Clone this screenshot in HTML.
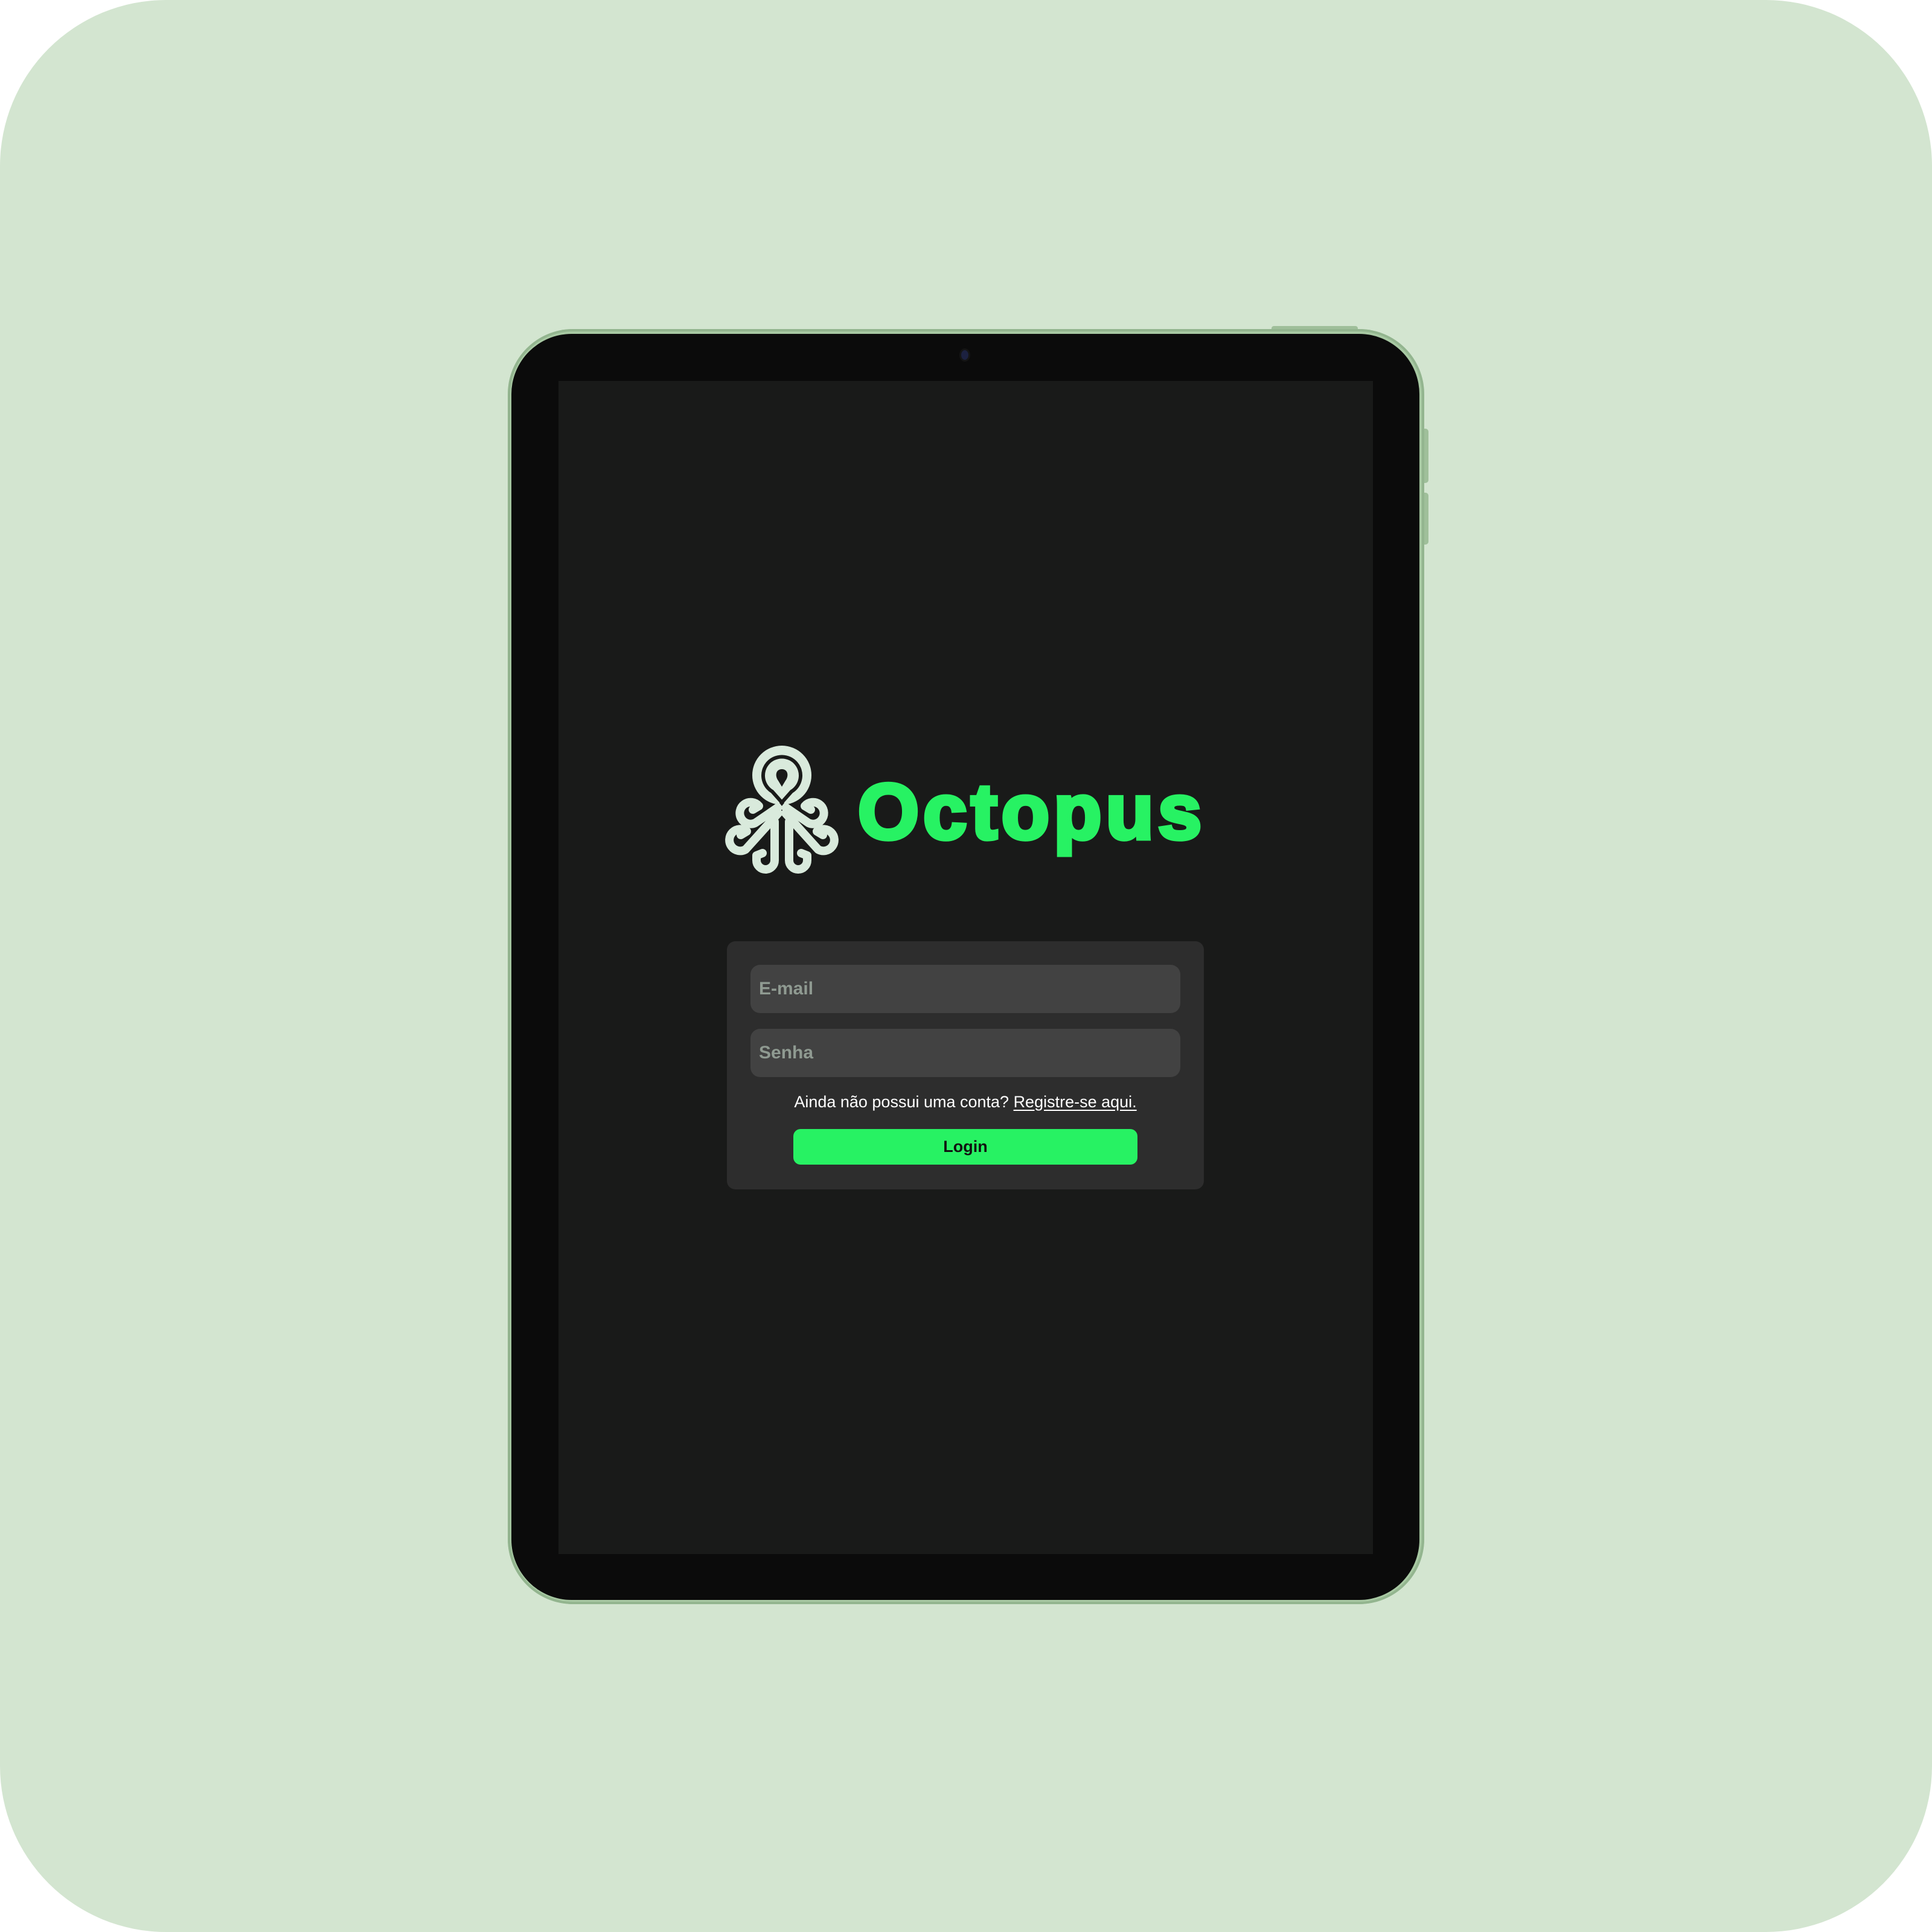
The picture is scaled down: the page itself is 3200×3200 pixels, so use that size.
<!DOCTYPE html>
<html><head><meta charset="utf-8"><style>
html,body{margin:0;padding:0;background:#fff}
.page{position:relative;width:3200px;height:3200px;background:#d3e5d0;border-radius:275px;overflow:hidden;font-family:"Liberation Sans",sans-serif}
.abs{position:absolute}
.frame{left:841px;top:545px;width:1518px;height:2112px;border-radius:108px;background:#a8c9a3;box-shadow:inset 0 0 0 4px #93b58f}
.bezel{left:847px;top:553px;width:1504px;height:2097px;border-radius:100px;background:#0b0b0b}
.screen{left:925px;top:631px;width:1349px;height:1943px;background:#191a19}
.btn-top{left:2106px;top:540px;width:143px;height:7px;background:#9fbf9a;border-radius:4px 4px 0 0}
.side{left:2357px;width:9px;background:#9fbf9a;border-radius:0 5px 5px 0}
.cam{left:1592px;top:580px;width:12px;height:16px;border-radius:50%;background:#1c2140;box-shadow:0 0 0 3px #151515}
.title{left:1421px;top:1279px;font-size:130px;font-weight:bold;color:#27f263;letter-spacing:7px;-webkit-text-stroke:7px #27f263;line-height:1}
.card{left:1204px;top:1559px;width:790px;height:411px;background:#2d2d2d;border-radius:14px}
.inp{left:1243px;width:712px;height:80px;background:#424242;border-radius:16px;color:#8f9a91;font-weight:bold;font-size:30px;line-height:80px;text-indent:14px}
.note{left:1204px;width:790px;top:1810px;text-align:center;color:#fff;font-size:27px}
.note u{text-underline-offset:4px}
.login{left:1314px;top:1870px;width:570px;height:59px;background:#27f263;border-radius:12px;text-align:center;line-height:59px;font-weight:bold;font-size:27px;color:#111}
</style></head><body>
<div class="page">
  <div class="abs btn-top"></div>
  <div class="abs side" style="top:710px;height:90px"></div>
  <div class="abs side" style="top:816px;height:86px"></div>
  <div class="abs frame"></div>
  <div class="abs bezel"></div>
  <div class="abs cam"></div>
  <div class="abs screen"></div>

  <svg class="abs" style="left:1195px;top:1225px" width="210" height="230" viewBox="0 0 210 230">
    <g fill="none" stroke="#d9eadc" stroke-linecap="round" stroke-linejoin="round">
      <g id="half" stroke-width="14">
        <path d="M94,112 L56,138 A18,18 0 1 1 62,110 L52,116"/>
        <path d="M94,122 L40,182 A18,18 0 1 1 42,152 L32,158"/>
        <path d="M88,136 L88,200 A15,15 0 0 1 58,200 L58,192 L68,188"/>
      </g>
      <use href="#half" transform="translate(200,0) scale(-1,1)"/>
    </g>
    <circle cx="100" cy="59" r="49" fill="#d9eadc"/>
    <path d="M60,86 L100,112 L140,86 Z" fill="#d9eadc"/>
    <path d="M84,86 A31,31 0 1 1 116,86 L100,104 Z" fill="none" stroke="#191a19" stroke-width="6" stroke-linejoin="round"/>
    <path d="M100,49 C110,49 112,60 106,68 L100,78 L94,68 C88,60 90,49 100,49 Z" fill="#191a19"/>
    <path d="M100,100 L104,105 L100,110 L96,105 Z" fill="#191a19"/>
  </svg>
  <div class="abs title">Octopus</div>

  <div class="abs card"></div>
  <div class="abs inp" style="top:1598px">E-mail</div>
  <div class="abs inp" style="top:1704px">Senha</div>
  <div class="abs note">Ainda não possui uma conta? <u>Registre-se aqui.</u></div>
  <div class="abs login">Login</div>
</div>
</body></html>
